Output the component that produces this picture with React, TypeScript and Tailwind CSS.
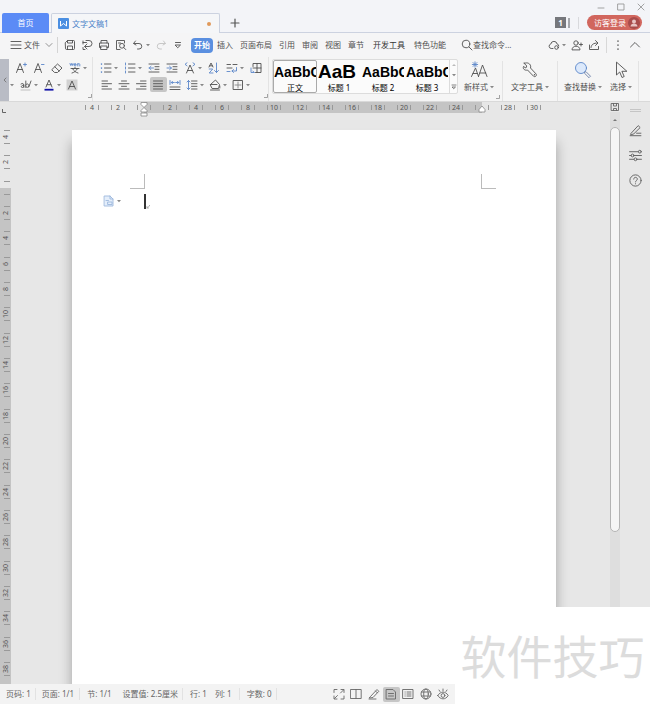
import type { ReactNode } from "react";
import clsx from "clsx";

type IconProps = { children: ReactNode; className?: string; box?: string };

// every small icon is drawn on a 12 unit grid, the large ones on 18
function Icon({ children, className, box = "0 0 12 12" }: IconProps) {
    return (
        <svg
            viewBox={box}
            className={clsx("shrink-0", className ?? "size-3")}
            fill="none"
            stroke="currentColor"
            strokeWidth="0.9"
            strokeLinecap="round"
            strokeLinejoin="round"
            aria-hidden="true"
        >
            {children}
        </svg>
    );
}

function Caret() {
    return (
        <svg viewBox="0 0 4 4" className="size-1 shrink-0" aria-hidden="true">
            <path d="M0 1h4L2 3.2z" fill="#888" />
        </svg>
    );
}

const BLUE = "#5b87c9";

type ToolProps = { label: string; children: ReactNode; caret?: boolean; active?: boolean };

function Tool({ label, children, caret, active }: ToolProps) {
    return (
        <button
            type="button"
            aria-label={label}
            className={clsx(
                "flex h-[15px] shrink-0 items-center gap-[2px] rounded-xs pl-[2px] pr-[3px]",
                active && "bg-[#c6c6c6]"
            )}
        >
            <Icon>{children}</Icon>
            {caret && <Caret />}
        </button>
    );
}

function TitleBar() {
    return (
        <header className="bg-[#f3f4f8]">
            <div className="flex h-[13px] items-center justify-end gap-3 pr-[5px] text-[#999]">
                <button type="button" aria-label="最小化"><Icon className="size-2" box="0 0 8 8"><path d="M1 5h6" /></Icon></button>
                <button type="button" aria-label="最大化"><Icon className="size-2" box="0 0 8 8"><path d="M1 1h6v6H1z" /></Icon></button>
                <button type="button" aria-label="关闭"><Icon className="size-2" box="0 0 8 8"><path d="M1 1l6 6M7 1L1 7" /></Icon></button>
            </div>
            <div className="flex h-5 items-stretch">
                <div className="w-[2px] border-b border-[#ccd2e0]" />
                <button type="button" className="w-[47px] rounded-t-xs bg-[#5b8bf6] text-white">首页</button>
                <div className="w-[2px] border-b border-[#ccd2e0]" />
                <div className="flex w-[169px] items-center gap-[3px] rounded-t-xs border border-b-0 border-[#ccd2e0] bg-[#f5f6f8] px-[6px] text-[#4b82c8]">
                    <svg viewBox="0 0 11 11" className="size-[11px]" aria-hidden="true">
                        <rect width="11" height="11" rx="1" fill="#4b8fe2" />
                        <path d="M2.500 3v5l3-2.500 3 2.500V3" fill="none" stroke="#fff" />
                    </svg>
                    <span>文字文稿1</span>
                    <span className="ml-auto mr-[2px] size-1 rounded-full bg-[#e0995a]" />
                </div>
                <div className="flex flex-1 items-center border-b border-[#ccd2e0] pr-2">
                    <button type="button" aria-label="新建" className="ml-[9px] text-[#555]">
                        <Icon><path d="M6 2v8M2 6h8" strokeWidth="1.2" /></Icon>
                    </button>
                    <div className="ml-auto flex items-center gap-[2px]">
                        <span className="flex h-[11px] w-[11px] items-center justify-center bg-[#75777c] font-bold text-white">1</span>
                        <span className="h-[10px] w-[2px] bg-[#a5a7ac]" />
                    </div>
                    <div className="mx-2 h-3 w-px bg-[#d8d9dd]" />
                    <button type="button" className="flex h-[15px] items-center gap-[2px] rounded-full bg-[#d1665e] pl-[7px] pr-[2px] text-white">
                        访客登录
                        <svg viewBox="0 0 12 12" className="size-3" aria-hidden="true">
                            <circle cx="6" cy="6" r="6" fill="#a84b4b" />
                            <circle cx="6" cy="4.5" r="2" fill="#e8c4c4" />
                            <path d="M2.500 9.500c0-4 7-4 7 0z" fill="#e8c4c4" />
                        </svg>
                    </button>
                </div>
            </div>
        </header>
    );
}

const mainTabs = ["插入", "页面布局", "引用", "审阅", "视图", "章节"];

function MenuBar() {
    return (
        <div className="flex h-6 items-center bg-[#f5f5f6] pl-[10px] pr-[9px]">
            <button type="button" className="flex items-center gap-[2px]">
                <Icon><path d="M1 2.500h10M1 6h10M1 9.500h10" /></Icon>
                文件
                <Icon className="ml-[3px] size-2" box="0 0 8 8"><path d="M1 2.500l3 3 3-3" stroke="#888" /></Icon>
            </button>
            <div className="mx-1 h-4 w-px bg-[#d4d4d4]" />
            <div className="flex items-center">
                <Tool label="保存"><path d="M1.500 3.500l2-2h6a1 1 0 011 1v7a1 1 0 01-1 1h-7a1 1 0 01-1-1zM3.500 1.500V4h5V1.500M3.500 10.500V7h5v3.500" /></Tool>
                <Tool label="输出"><path d="M2 2v3M2 3.500h3.500M5 1.500h3a2.500 2.500 0 010 6H4M6 5L3.500 7.500 6 10M2 8.500v2h2" /></Tool>
                <Tool label="打印"><path d="M3 4V1.500h6V4M3 8.500H1.500V4h9v4.500H9M3 7h6v3.500H3z" /></Tool>
                <Tool label="打印预览"><path d="M5 10.500H1.500v-9h8V4M3.500 4h2" /><circle cx="7" cy="6.800" r="2.400" /><path d="M8.800 8.600l2 2" /></Tool>
                <Tool label="撤销" caret><path d="M3.500 2L1.500 4.500 4 6M2 4.500h5a2.500 2.500 0 010 5.500H5.500" /></Tool>
                <span className="text-[#c2c2c2]">
                    <Tool label="恢复"><path d="M8.500 2l2 2.500L8 6M10 4.500H5A2.500 2.500 0 005 10h1.500" /></Tool>
                </span>
                <Tool label="更多"><path d="M3.500 3.500h5M3.500 6h5L6 8.500z" /></Tool>
            </div>
            <nav className="ml-1 flex items-center gap-px">
                <button type="button" className="h-[15px] rounded-sm bg-[#5a8fe0] px-[3px] font-bold text-white">开始</button>
                {mainTabs.map((t) => (
                    <button type="button" key={t} className="px-[3px]">{t}</button>
                ))}
                <div className="flex gap-[9px] px-[5px]">
                    <button type="button" className="text-[#333]">开发工具</button>
                    <button type="button">特色功能</button>
                </div>
            </nav>
            <label className="ml-[10px] flex items-center">
                <Icon><circle cx="5" cy="5" r="3.800" /><path d="M8 8l3 3" /></Icon>
                <input type="text" aria-label="查找命令" placeholder="查找命令..." className="w-12 bg-transparent outline-none placeholder:text-[#555]" />
            </label>
            <div className="ml-auto flex items-center">
                <Tool label="云同步" caret><path d="M5 9.500H3.200a2.300 2.300 0 01-.4-4.500 3.200 3.200 0 016.300 0 2 2 0 011.700 2" /><circle cx="8.500" cy="8.500" r="1.800" /></Tool>
                <Tool label="协作"><circle cx="5" cy="4" r="2.200" /><path d="M1 10.500c0-4.500 8-4.500 8 0zM8.500 5.500h3M10 4v3" /></Tool>
                <Tool label="分享"><path d="M1.500 6v4.500h9V7.500M3 8.500c.3-3 2.500-4.500 6.500-4.500M7.500 1.500L10 4 7.500 6.500" /></Tool>
                <div className="mx-[3px] h-4 w-px bg-[#d8d8d8]" />
                <Tool label="更多选项"><path d="M6 2v.2M6 6v.2M6 10v.2" strokeWidth="1.400" /></Tool>
                <button type="button" aria-label="收起功能区" className="ml-[2px]"><Icon><path d="M1.500 8L6 3.500 10.500 8" /></Icon></button>
            </div>
        </div>
    );
}

function Corner() {
    return (
        <Icon className="ml-auto size-1" box="0 0 4 4"><path d="M3.500 0v3.500H0" stroke="#999" /></Icon>
    );
}

const styleCards = [
    { name: "正文", text: "AaBbC", sample: "text-[14px]" },
    { name: "标题 1", text: "AaB", sample: "text-[19px]" },
    { name: "标题 2", text: "AaBbC", sample: "text-[14px]" },
    { name: "标题 3", text: "AaBbC", sample: "text-[14px]" },
];

type BigToolProps = { label: string; children: ReactNode };

function BigTool({ label, children }: BigToolProps) {
    return (
        <button type="button" className="flex h-[31px] shrink-0 flex-col items-center justify-between">
            <Icon className="size-[18px]" box="0 0 18 18">{children}</Icon>
            <span className="flex items-center gap-[2px] leading-[10px]">{label}<Caret /></span>
        </button>
    );
}

function Ribbon() {
    return (
        <div className="flex h-[45px] border-b border-[#d9d9d9] bg-[#f5f5f5]">
            <button type="button" aria-label="向左滚动" className="mt-[2px] flex w-[9px] shrink-0 items-center justify-center bg-[#b9bcc5] text-[#777]">
                <Icon className="size-[6px]" box="0 0 6 6"><path d="M4 1L2 3l2 2" /></Icon>
            </button>
            <div className="flex w-[84px] shrink-0 flex-col gap-[2px] border-r border-[#e3e3e3] pt-[3px]">
                <div className="flex gap-px pl-1">
                    <Tool label="增大字号"><path d="M1.500 10.500l3.500-9 3.500 9M2.700 7.500h4.600" /><path d="M8.500 2.500h3M10 1v3" stroke={BLUE} /></Tool>
                    <Tool label="减小字号"><path d="M1.500 10.500l3.500-9 3.500 9M2.700 7.500h4.600" /><path d="M8.500 2.500h2.500" stroke={BLUE} /></Tool>
                    <Tool label="清除格式"><path d="M1 7.500L6.500 2l4.500 4-4.500 4.500H4zM3.800 4.800l4.400 4.200" /></Tool>
                    <Tool label="拼音指南" caret><path d="M1 1.500l.7 2 .8-2 .8 2 .7-2M5 2.700h2.200c0-1.600-2.200-1.600-2.200 0s1.700 1.400 2.200.7M8.800 4V1.500M8.800 2.300c.5-1 2-1 2 .2V4" stroke={BLUE} /><path d="M2 6.500h8M6 5.300v1.200M3.500 6.500c1 2.500 3.500 4 5.500 4.500M8.500 6.500c-1 2.500-3.500 4-5.500 4.500" /></Tool>
                </div>
                <div className="flex items-center">
                    <div className="flex w-[9px] justify-start pl-px"><Caret /></div>
                    <Tool label="突出显示" caret><path d="M1 5c1.500-1 2.800-.5 2.800 1v2.500M3.800 6.200C1 6 .6 8.500 2.200 8.500c.8 0 1.600-.6 1.600-1.200M5.800 2v6.500M5.800 6c1-2 3-1 3 .7S6.800 9 5.800 7.500M11 2L8.800 8" /><path d="M1 11h9" stroke="#bbb" /></Tool>
                    <Tool label="字体颜色" caret><path d="M3 8l3-7 3 7M4 5.700h4" /><path d="M1.500 10.700h9" stroke="#1111a8" strokeWidth="1.800" strokeLinecap="butt" /></Tool>
                    <Tool label="字符底纹"><path d="M.5.500h11v11H.5z" fill="#d2d2d2" stroke="none" /><path d="M2.500 10L6 2l3.500 8M3.600 7.500h4.800" /></Tool>
                </div>
                <Corner />
            </div>
            <div className="flex w-[176px] shrink-0 flex-col gap-[2px] border-r border-[#e3e3e3] pt-[3px]">
                <div className="flex gap-px pl-[5px]">
                    <Tool label="项目符号" caret><path d="M4.500 2H11M4.500 6H11M4.500 10H11" /><path d="M1.500 2v.1M1.500 6v.1M1.500 10v.1" stroke={BLUE} strokeWidth="1.600" /></Tool>
                    <Tool label="编号" caret><path d="M4.500 2H11M4.500 6H11M4.500 10H11" /><path d="M1.500 1v2M1.500 5v2M1.500 9v2" stroke={BLUE} /></Tool>
                    <Tool label="减少缩进"><path d="M1 2h10M7 4.700h4M7 7.300h4M1 10h10" /><path d="M5.500 6H1M3 4.300L1.200 6 3 7.700" stroke={BLUE} /></Tool>
                    <Tool label="增加缩进"><path d="M1 2h10M7 4.700h4M7 7.300h4M1 10h10" /><path d="M1 6h4.500M3.600 4.300L5.400 6 3.600 7.700" stroke={BLUE} /></Tool>
                    <Tool label="字符缩放" caret><path d="M2.500 11L6 3l3.500 8M3.600 8.500h4.800" /><path d="M3 .8L1 2.300l2 1.500M9 .8l2 1.500-2 1.500" stroke={BLUE} /></Tool>
                    <Tool label="排序"><path d="M1 5l2-4 2 4M1.700 3.800h2.600" /><path d="M1.200 7h3.500l-3.500 4h3.800M8.500 1v9.500M6.500 8.500l2 2 2-2" stroke={BLUE} /></Tool>
                    <Tool label="换行" caret><path d="M1 2.500h3.500M7 2.500h4M1 6h5" /><path d="M1 9.500h3M10.500 5.500v3.500H6M7.500 7.500L6 9l1.500 1.500" stroke={BLUE} /></Tool>
                    <Tool label="制表位"><path d="M3 4.500v-3h8v9H5.500M7 1.500v9M3 6h8" /><path d="M1 6v4.500h3M2.800 9l1.500 1.500" stroke={BLUE} /></Tool>
                </div>
                <div className="flex pl-[6px]">
                    <Tool label="左对齐"><path d="M1 2h5.500M1 4.700h9.500M1 7.300h5.500M1 10h9.500" /></Tool>
                    <Tool label="居中"><path d="M3.500 2h5M1 4.700h10M3.500 7.300h5M1 10h10" /></Tool>
                    <Tool label="右对齐"><path d="M5.500 2H11M1.500 4.700H11M5.500 7.300H11M1.500 10H11" /></Tool>
                    <Tool label="两端对齐" active><path d="M1.500 2h9M1.500 4.700h9M1.500 7.300h9M1.500 10h9" /></Tool>
                    <Tool label="分散对齐"><path d="M1 8h10M1 10.500h10" /><path d="M1 1.500v4M11 1.500v4M2.500 3.500h2.800M9.500 3.500H6.700M3.500 2.300L2.300 3.500l1.200 1.200M8.500 2.300l1.200 1.200-1.200 1.200" stroke={BLUE} /></Tool>
                    <Tool label="行距" caret><path d="M5.500 2H11M5.500 4.700H11M5.500 7.300H11M5.500 10H11" /><path d="M2.500 1.500v9M1 3l1.500-1.500L4 3M1 9l1.500 1.500L4 9" stroke={BLUE} /></Tool>
                    <Tool label="底纹颜色" caret><path d="M1.500 5.500L6.500 1l4 4.500-1 4h-6zM1.500 5.500h6.500M10.800 7v2M1.500 11h9" /></Tool>
                    <Tool label="边框" caret><path d="M1.500 1.500h9v9h-9z" /><path d="M6 3v6M3 6h6" stroke="#888" /></Tool>
                </div>
                <Corner />
            </div>
            <div className="ml-[3px] mt-[2px] flex h-[35px] shrink-0 rounded-xs border border-[#dcdcdc] bg-[#fbfbfb]">
                {styleCards.map((s, i) => (
                    <button
                        type="button"
                        key={s.name}
                        className={clsx(
                            "flex h-[33px] w-11 flex-col overflow-hidden border text-black",
                            i === 0 ? "rounded-xs border-[#aaa]" : "border-transparent"
                        )}
                    >
                        <span className={clsx("flex h-[22px] w-full items-center overflow-hidden font-['Liberation_Sans',sans-serif] font-bold leading-5", s.sample)}>
                            {s.text}
                        </span>
                        <span className="w-full text-center leading-[9px]">{s.name}</span>
                    </button>
                ))}
                <div className="flex w-2 flex-col items-center justify-around border-l border-[#dcdcdc]">
                    <svg viewBox="0 0 4 4" className="size-1" aria-hidden="true"><path d="M0 3h4L2 1z" fill="#bbb" /></svg>
                    <Caret />
                    <Icon className="size-[6px]" box="0 0 6 6"><path d="M1 1h4M1.500 3h3L3 4.500z" strokeWidth="0.7" /></Icon>
                </div>
            </div>
            <div className="flex flex-1 pt-[4px]">
                <div className="flex flex-col justify-between border-r border-[#e3e3e3] pr-[2px]">
                    <div className="flex pl-[6px] pr-[6px]">
                        <BigTool label="新样式">
                            <path d="M1.500 15.500l4-8.500 3 8.500M3 12.500h4.500M8.500 15.500l4-11.500 4.500 11.500M9.800 12h6" />
                            <path d="M5 .8v5.400M2.300 3.500h5.400M3.100 1.600l3.800 3.800M6.900 1.600L3.100 5.400" stroke={BLUE} />
                        </BigTool>
                    </div>
                    <div className="flex pb-[2px]"><Corner /></div>
                </div>
                <div className="border-r border-[#e3e3e3] px-2">
                    <BigTool label="文字工具">
                        <path d="M3 2.200l2.800 2.800-1 2L2.500 5.500C1.500 8 4 9.800 6.500 9l6 6.200c1.800 1.300 3.700-.7 2.500-2.300L9.500 7c1-3-1.800-6-5-5z" />
                        <path d="M13.500 13.700v.1" strokeWidth="1.300" />
                    </BigTool>
                </div>
                <div className="flex gap-2 border-r border-[#e3e3e3] px-[6px]">
                    <BigTool label="查找替换">
                        <circle cx="7" cy="7" r="5.500" fill="#dce9fb" stroke={BLUE} />
                        <path d="M11 11l1-.3 4.500 4.500-1.500 1.500-4.500-4.500z" stroke="#6a7fa8" />
                    </BigTool>
                    <BigTool label="选择">
                        <path d="M4.500 1.500v12.500l3.200-3 2.300 5.500 2.200-1-2.300-5.200h4.600z" />
                    </BigTool>
                </div>
            </div>
        </div>
    );
}

// ruler marks, counted from the text margin
const columns = Array.from({ length: 18 }, (_, i) => i * 2 - 4);
const rows = Array.from({ length: 22 }, (_, i) => i * 2 - 4);

function TopRuler() {
    return (
        <div className="flex h-[11px] overflow-hidden pl-[68px] text-[7px] text-[#555]">
            {columns.map((n) => (
                <div
                    key={n}
                    className={clsx(
                        "flex w-[26px] shrink-0 items-center justify-center",
                        n === 0 && "bg-linear-to-r from-transparent from-50% to-[#c4c4c4] to-50%",
                        n > 0 && n < 26 && "bg-[#c4c4c4]",
                        n === 26 && "bg-linear-to-r from-[#c4c4c4] from-50% to-transparent to-50%"
                    )}
                >
                    {n < 31 && <span className="h-[5px] w-px bg-[#999]" />}
                    <span className="w-3 text-center">{n !== 0 && n !== 26 && n < 31 ? Math.abs(n) : ""}</span>
                    {n < 31 && <span className="h-[5px] w-px bg-[#999]" />}
                </div>
            ))}
        </div>
    );
}

function SideRuler() {
    return (
        <div className="flex w-[11px] shrink-0 flex-col bg-[#c4c4c4] text-[7px] text-[#555]">
            <div className="h-[22px] bg-[#e7e7e7] pl-[2px] pt-[7px]">
                <Icon className="size-1" box="0 0 4 4"><path d="M.5 0v3.500H4" /></Icon>
            </div>
            {rows.map((n) => (
                <div
                    key={n}
                    className={clsx(
                        "flex h-[25px] shrink-0 flex-col items-end justify-center pr-px nth-[3n]:h-[26px]",
                        n < 0 && "bg-[#e7e7e7]",
                        n === 0 && "bg-linear-to-b from-[#e7e7e7] from-50% to-[#c4c4c4] to-50%"
                    )}
                >
                    <span className="h-px w-[6px] bg-[#999]" />
                    <span className="flex h-3 w-[9px] -rotate-90 items-center justify-center">{n === 0 ? "" : Math.abs(n)}</span>
                    <span className="h-px w-[6px] bg-[#999]" />
                </div>
            ))}
        </div>
    );
}

function Workspace() {
    return (
        <main className="flex flex-1 bg-[#e7e7e7]">
            <SideRuler />
            <div className="relative flex min-w-0 flex-1 flex-col overflow-hidden">
                <TopRuler />
                {/* indent markers sit over the ruler */}
                <svg viewBox="0 0 8 15" className="absolute left-[129px] top-0 h-[15px] w-2" fill="#fff" stroke="#888" strokeWidth="0.8" aria-hidden="true">
                    <path d="M1 .5h6v2l-3 3-3-3zM4 5.500l3 3v1.500H1V8.500zM1 11h6v3H1z" />
                </svg>
                <svg viewBox="0 0 8 8" className="absolute left-[467px] top-[3px] size-2" fill="#fff" stroke="#888" strokeWidth="0.8" aria-hidden="true">
                    <path d="M4 1l3 3.500V7H1V4.500z" />
                </svg>
                <div className="ml-[61px] mt-[17px] w-[484px] flex-1 bg-white pt-11 shadow-[0_12px_12px_rgba(0,0,0,0.3)]">
                    <div className="flex justify-between pl-[58px] pr-[60px]">
                        <div className="h-[15px] w-[15px] border-b border-r border-[#bbb]" />
                        <div className="h-[15px] w-[15px] border-b border-l border-[#bbb]" />
                    </div>
                    <div className="mt-1 flex h-4 items-center pl-[31px]">
                        <button type="button" aria-label="粘贴选项" className="flex items-center gap-[2px] text-[#9db8dc]">
                            <Icon><path d="M1.500 1h5.500l3 3v7H1.500z" fill="#e4eefb" /><path d="M7 1v3h3M3 5.500h2.500M5 7h4v2.500H5z" /></Icon>
                            <Caret />
                        </button>
                        <div className="ml-[23px] flex items-end">
                            <span className="h-[15px] w-[2px] bg-[#333]" />
                            <Icon className="size-1" box="0 0 4 4"><path d="M3.500 0v1L1 3M1 1.500V3h1.500" stroke="#aaa" /></Icon>
                        </div>
                    </div>
                </div>
            </div>
            <div className="flex w-[10px] shrink-0 flex-col items-center bg-[#dedede]">
                <div className="bg-[#e7e7e7] text-[#666]">
                    <Icon className="size-[10px]" box="0 0 10 10"><path d="M1.500 1.500h7v7h-7zM3.500 1.500v2.500h3V1.500M3.500 8.500V6.500h3v2" /></Icon>
                </div>
                <svg viewBox="0 0 4 4" className="mb-[5px] mt-[6px] size-1" aria-hidden="true"><path d="M0 3h4L2 1z" fill="#777" /></svg>
                <div className="h-[405px] w-[10px] rounded-full border border-[#b4b4b4] bg-[#f6f6f6]" />
            </div>
            <aside className="flex w-[30px] shrink-0 flex-col items-center gap-3 pt-[7px] text-[#666]">
                <div className="h-[3px] w-[11px] border-y border-[#c5c5c5]" />
                <button type="button" aria-label="编辑"><Icon className="size-[13px]"><path d="M1 10.800h10M2 8.500L8.500 1.500l1.800 1.800L4.500 9 2 10zM7 8.500h4" /></Icon></button>
                <button type="button" aria-label="设置"><Icon className="size-[13px]"><path d="M.5 2.500h8M4.500 6h7M.5 6h1.500M.5 9.500h4M7.500 9.500h4" /><circle cx="10" cy="2.500" r="1.300" /><circle cx="3.300" cy="6" r="1.300" /><circle cx="6" cy="9.500" r="1.300" /></Icon></button>
                <button type="button" aria-label="帮助"><Icon className="size-[13px]"><circle cx="6" cy="6" r="5.200" /><path d="M4.300 4.700C4.300 2.400 7.700 2.600 7.700 4.700 7.700 6 6 6 6 7.300M6 9v.1" /></Icon></button>
            </aside>
        </main>
    );
}

function StatusBar() {
    return (
        <footer className="flex h-5 items-center bg-[#f3f3f3] pl-[6px] text-[#666]">
            <div className="flex items-center divide-x divide-[#e2e2e2] whitespace-pre">
                <span className="pr-1">页码: 1</span>
                <span className="pl-[6px] pr-[5px]">页面: 1/1</span>
                <span className="flex gap-[11px] pl-[7px] pr-1"><span>节: 1/1</span><span>设置值: 2.5厘米</span></span>
                <span className="flex gap-2 px-[7px]"><span>行: 1</span><span>列: 1</span></span>
                <span className="pl-[7px] pr-1">字数: 0</span>
                <span className="h-3" />
            </div>
            <div className="ml-auto mr-[198px] flex w-[121px] items-center justify-between">
                <Tool label="全屏"><path d="M1 4.500V1.500h3M8 1.500h3v3M11 8v3H8M4 11H1V8M7.500 5L10.500 2M4.500 7.500L1.500 10.500" /></Tool>
                <Tool label="阅读版式"><path d="M.8 1.500h10.400v9H.8zM6 1.500v9" /></Tool>
                <Tool label="写作模式"><path d="M1 11h7M2.500 8.500L9 1.500l1.800 1.800L5 9.500 1.500 10zM7.500 3l1.800 1.800" /></Tool>
                <Tool label="页面视图" active><path d="M1.500 1.500h6.500l2.500 2.500v7h-9zM3.500 5.500h5M3.500 8h5" /></Tool>
                <Tool label="大纲"><path d="M1 1.500h10v9H1zM3 4h.2M3 6h.2M3 8h.2M5 4h4M5 6h4M5 8h4" /></Tool>
                <Tool label="Web版式"><circle cx="6" cy="6" r="5" /><ellipse cx="6" cy="6" rx="2.300" ry="5" /><path d="M1.500 4h9M1.500 8h9" /></Tool>
                <Tool label="护眼模式"><path d="M.8 7.500c2.500-4.500 7.900-4.500 10.400 0-2.500 4.500-7.900 4.500-10.400 0zM6 3V1M3 3.500L2 2M9 3.500L10 2" /><circle cx="6" cy="7.500" r="1.900" /></Tool>
            </div>
        </footer>
    );
}

export default function App() {
    return (
        <div className="relative flex min-h-screen w-full flex-col font-['Noto_Sans','Noto_Sans_CJK_SC',sans-serif] text-[8px] leading-[12px] text-[#505050]" lang="zh-CN">
            <TitleBar />
            <MenuBar />
            <Ribbon />
            <Workspace />
            <StatusBar />
            <div className="absolute bottom-0 right-0 flex h-[97px] w-[195px] items-center justify-center bg-white text-[46px] text-[#dcdcdc]">
                软件技巧
            </div>
        </div>
    );
}
